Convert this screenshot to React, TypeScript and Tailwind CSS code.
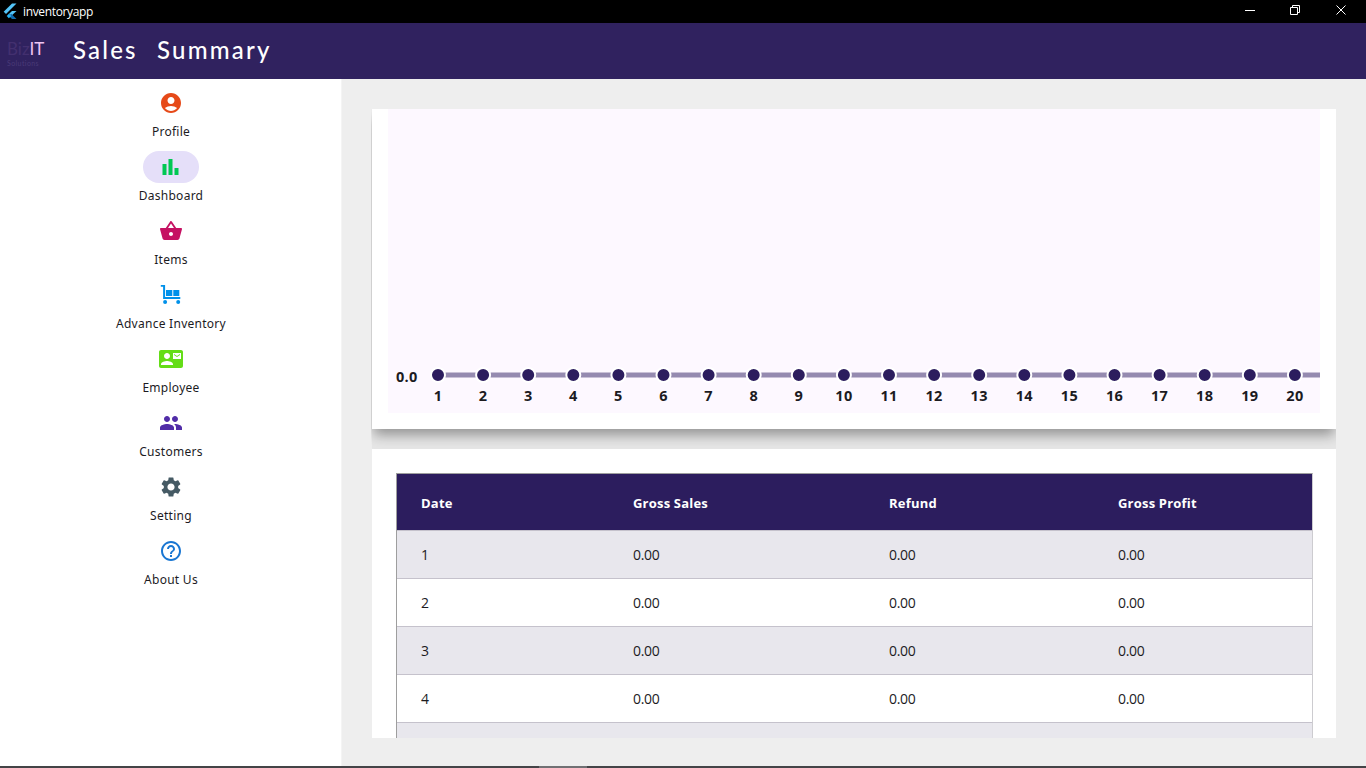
import type { ReactNode } from "react";
import {
  MdAccountCircle,
  MdBarChart,
  MdShoppingBasket,
  MdContactMail,
  MdPeople,
  MdSettings,
  MdHelpOutline,
} from "react-icons/md";

const Trolley = () => (
  <svg width="24" height="24" viewBox="0 0 24 24" fill="#0091ea">
    <path d="M1.800 2h4.300v12h15.200v2H4.100V3.800H1.800z" />
    <path d="M7 7h6.300v6H7zM14.300 7h6v6h-6z" />
    <path d="M4.100 19a2 2 0 1 0 4 0a2 2 0 1 0 -4 0M17.200 19a2 2 0 1 0 4 0a2 2 0 1 0 -4 0" />
  </svg>
);

type Item = { label: string; icon: ReactNode; active?: boolean };

const items: Item[] = [
  { label: "Profile", icon: <MdAccountCircle size={24} color="#e64a19" /> },
  { label: "Dashboard", icon: <MdBarChart size={24} color="#00c853" />, active: true },
  { label: "Items", icon: <MdShoppingBasket size={24} color="#c51162" /> },
  { label: "Advance Inventory", icon: <Trolley /> },
  { label: "Employee", icon: <MdContactMail size={24} color="#64dd17" /> },
  { label: "Customers", icon: <MdPeople size={24} color="#512da8" /> },
  { label: "Setting", icon: <MdSettings size={24} color="#455a64" /> },
  { label: "About Us", icon: <MdHelpOutline size={24} color="#1976d2" /> },
];

const days = Array.from({ length: 20 }, (_, i) => i + 1);
const dayX = (d: number) => 50 + (d - 1) * 45.1;

function TitleBar() {
  return (
    <div className="flex h-[23px] shrink-0 items-center bg-black text-white">
      <svg className="ml-[3px]" width="14" height="18" viewBox="0 0 14 18">
        <path d="M9 .5h4.500L3 11 .7 8.700z" fill="#54c5f8" />
        <path d="M9 7.900h4.500l-5.300 5.200L5.900 10.900z" fill="#54c5f8" />
        <path d="M5.900 13.100l2.300-2.300 5.300 5.200H9l-3.100-3z" fill="#0f6cb0" />
        <path d="M3.700 13l2.200-2.200 2.300 2.200-2.300 2.300z" fill="#29b6f6" />
      </svg>
      <span className="ml-[6px] pt-px font-['Open_Sans',sans-serif] text-[12px] tracking-[-0.35px]">inventoryapp</span>
      <svg className="mb-[3px] ml-auto mr-[18px]" width="104" height="12" viewBox="0 0 104 12" fill="none" stroke="#fff">
        <path d="M1 6.500h10M46.500 3.500h7v7h-7zM48.500 3v-1.500h7v7H54M92.500 1.500l9 9M101.500 1.500l-9 9" />
      </svg>
    </div>
  );
}

function AppBar() {
  return (
    <header className="flex h-14 shrink-0 items-center bg-[#30225f]">
      <div className="ml-[7px] w-[66px] pt-[2px] font-['Lato',sans-serif]">
        <div className="text-[17px] leading-[21px] text-[#43306f]">
          Biz<span className="text-[#efc5f5]">IT</span>
        </div>
        <div className="text-[7px] leading-[8px] tracking-[0.4px] text-[#4a3a78]">Solutions</div>
      </div>
      <h1 className="pb-[3px] font-['Lato',sans-serif] text-[24px] font-medium tracking-[2.2px] text-white [word-spacing:11px]">
        Sales Summary
      </h1>
    </header>
  );
}

function Sidebar() {
  return (
    <nav className="flex w-[341px] shrink-0 flex-col bg-white pt-2">
      {items.map((it) => (
        <div key={it.label} className="-mr-px flex h-16 flex-col items-center">
          <div
            className={
              it.active
                ? "flex h-8 w-14 items-center justify-center rounded-full bg-[#e5dff9] [&_path]:-translate-x-[0.5px]"
                : "flex h-8 w-14 items-center justify-center"
            }
          >
            {it.icon}
          </div>
          <div className="mt-[5px] font-['Noto_Sans',sans-serif] text-[12px] leading-4 tracking-[0.27px] text-[#1c1b1f]">
            {it.label}
          </div>
        </div>
      ))}
    </nav>
  );
}

function Chart() {
  return (
    <section className="relative z-0 h-[320px] shrink-0 bg-white px-4 pb-4 shadow-[0_8px_12px_-2px_rgba(0,0,0,0.36)]">
      <svg width="932" height="304" className="bg-[#fdf8ff] font-['Open_Sans','Noto_Sans',sans-serif]">
        <path d="M50 266H932" stroke="#958ab0" strokeWidth="5" />
        <g fontSize="14.500" fontWeight="700" fill="#1c1b1f">
          <text x="8" y="273" letterSpacing="0.3">0.0</text>
          {days.map((d) => (
            <g key={d}>
              <circle cx={dayX(d)} cy="266" r="7" fill="#2c1d5e" stroke="#fff" strokeWidth="2" />
              <text x={dayX(d)} y="292" textAnchor="middle" letterSpacing="0.3">{d}</text>
            </g>
          ))}
        </g>
      </svg>
    </section>
  );
}

const columns = "grid grid-cols-[212px_256px_229px_1fr] items-center pl-6";

function SalesTable() {
  return (
    <section className="relative z-10 h-[289px] overflow-hidden bg-white px-6 pt-6">
      <div className="-mr-px border border-[#9e9e9e] border-r-[#cdccd0] font-['Open_Sans','Noto_Sans',sans-serif] text-[13px] text-[#1c1b1f]">
        <div className={`${columns} h-14 bg-[#2c1d5e] pt-[3px] font-bold tracking-[0.2px] text-white`}>
          <span>Date</span>
          <span>Gross Sales</span>
          <span>Refund</span>
          <span>Gross Profit</span>
        </div>
        {[1, 2, 3, 4].map((n) => (
          <div
            key={n}
            className={`${columns} h-12 border-t border-[#c5c2cc] text-[14px] tracking-[-0.35px] ${n % 2 ? "bg-[#e8e7ed]" : "bg-white"}`}
          >
            <span>{n}</span>
            <span>0.00</span>
            <span>0.00</span>
            <span>0.00</span>
          </div>
        ))}
        <div className="h-12 border-t border-[#c5c2cc] bg-[#e8e7ed]" />
      </div>
    </section>
  );
}

export default function App() {
  return (
    <div className="flex h-[768px] w-[1366px] flex-col overflow-hidden">
      <TitleBar />
      <AppBar />
      <div className="flex h-[687px] shrink-0">
        <Sidebar />
        <main className="flex-1 border-l border-[#f4f4f4] bg-[#eeeeee] pb-7 pl-[30px] pr-[30px] pt-[30px]">
          <div className="-ml-px h-[629px] overflow-hidden pl-px">
            <Chart />
            <div className="h-5 bg-[#e6e6e6]" />
            <SalesTable />
          </div>
        </main>
      </div>
      <div className="flex h-[2px] bg-[#444447]">
        <div className="ml-[539px] w-12 bg-[#707073]" />
      </div>
    </div>
  );
}
